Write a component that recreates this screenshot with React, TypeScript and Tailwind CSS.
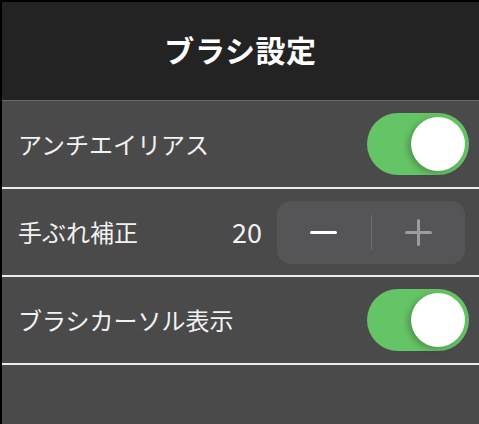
const font = { fontFamily: '"Noto Sans CJK JP", "Noto Sans", sans-serif' };

function Toggle() {
  return (
    <div className="relative h-[62px] w-[102px] rounded-full bg-[#65c466]">
      <div className="absolute right-[4px] top-[4px] h-[54px] w-[54px] rounded-full bg-white shadow-[-3px_2px_6px_rgba(0,0,0,0.25)]" />
    </div>
  );
}

function Divider() {
  return <div className="h-[2px] bg-[#ececec]" />;
}

export default function App() {
  return (
    <div
      className="flex h-[424px] w-[479px] flex-col overflow-hidden border-l-2 border-t-2 border-black bg-[#4a4a4a] text-white"
      style={font}
    >
      <header className="flex h-[99px] shrink-0 items-center justify-center border-b border-[#6a6a6a] bg-[#232323] pb-[3px]">
        <h1 className="text-[30px] font-bold tracking-[0.02em]">ブラシ設定</h1>
      </header>

      <div className="flex h-[86px] shrink-0 items-center justify-between pl-[16px] pr-[10px]">
        <span className="text-[24px] text-[#f2f2f2]">アンチエイリアス</span>
        <Toggle />
      </div>
      <Divider />

      <div className="flex h-[86px] shrink-0 items-center justify-between pl-[16px] pr-[14px]">
        <span className="text-[24px] text-[#f2f2f2]">手ぶれ補正</span>
        <div className="flex items-center gap-[15px]">
          <span className="text-[27px] text-[#f2f2f2]">20</span>
          <div className="flex h-[63px] w-[188px] items-center rounded-[14px] bg-[#555557]">
            <button className="flex flex-1 items-center justify-center">
              <span className="block h-[3px] w-[27px] rounded-full bg-white" />
            </button>
            <span className="h-[35px] w-[1px] bg-[#6e6e70]" />
            <button className="relative flex flex-1 items-center justify-center">
              <span className="relative block h-[27px] w-[27px]">
                <span className="absolute left-0 top-[12px] h-[3px] w-[27px] rounded-full bg-[#9c9c9e]" />
                <span className="absolute left-[12px] top-0 h-[27px] w-[3px] rounded-full bg-[#9c9c9e]" />
              </span>
            </button>
          </div>
        </div>
      </div>
      <Divider />

      <div className="flex h-[86px] shrink-0 items-center justify-between pl-[16px] pr-[10px]">
        <span className="text-[24px] text-[#f2f2f2]">ブラシカーソル表示</span>
        <Toggle />
      </div>
      <Divider />

      <div className="flex-1" />
    </div>
  );
}
